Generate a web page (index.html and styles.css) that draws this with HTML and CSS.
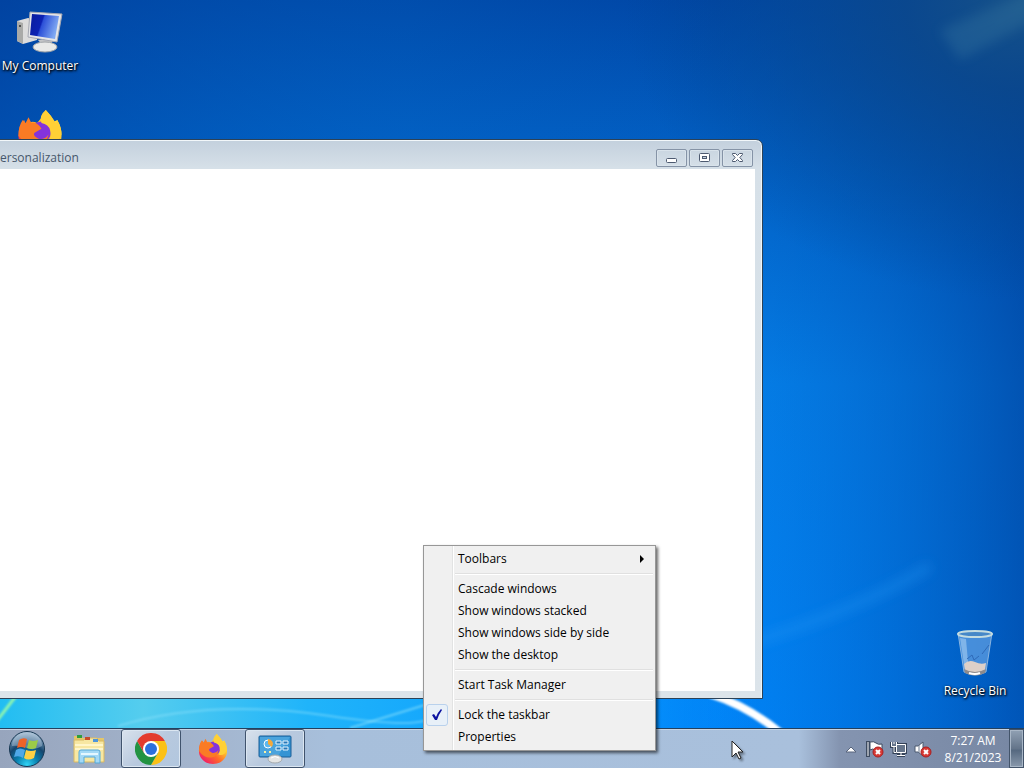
FILE: index.html
```html
<!DOCTYPE html>
<html lang="en">
<head>
    <meta charset="UTF-8">
    <meta name="viewport" content="width=device-width, initial-scale=1.0">
    <title>Desktop</title>
    <link rel="stylesheet" href="styles.css">
</head>
<body>
    <main class="desktop">
        <svg class="wallpaper" viewBox="0 0 1024 768" preserveAspectRatio="none" aria-hidden="true">
            <defs>
                <linearGradient id="sky" x1="0" y1="0" x2="0" y2="1">
                    <stop offset="0" stop-color="#0147a6"/>
                    <stop offset="0.2" stop-color="#0260c4"/>
                    <stop offset="0.5" stop-color="#057fe8"/>
                    <stop offset="1" stop-color="#0084f8"/>
                </linearGradient>
                <linearGradient id="shade" x1="0" y1="0" x2="1" y2="0">
                    <stop offset="0" stop-color="#003f9c" stop-opacity="0.5"/>
                    <stop offset="0.4" stop-color="#0068c8" stop-opacity="0.2"/>
                    <stop offset="0.7" stop-color="#0060c8" stop-opacity="0"/>
                    <stop offset="1" stop-color="#003c96" stop-opacity="0.65"/>
                </linearGradient>
                <linearGradient id="water" x1="0" y1="0" x2="1" y2="0">
                    <stop offset="0" stop-color="#22bdf2"/>
                    <stop offset="0.14" stop-color="#55cdee"/>
                    <stop offset="0.3" stop-color="#20b4fa"/>
                    <stop offset="0.6" stop-color="#0796ff"/>
                    <stop offset="0.74" stop-color="#0084f8" stop-opacity="0"/>
                </linearGradient>
                <radialGradient id="corner" cx="1" cy="0" r="1">
                    <stop offset="0" stop-color="#175289"/>
                    <stop offset="0.3" stop-color="#0c4788" stop-opacity="0.8"/>
                    <stop offset="1" stop-color="#00428c" stop-opacity="0"/>
                </radialGradient>
                <filter id="soft"><feGaussianBlur stdDeviation="1"/></filter>
                <filter id="softer" x="-20%" y="-50%" width="140%" height="200%"><feGaussianBlur stdDeviation="6"/></filter>
            </defs>
            <rect width="1024" height="768" fill="url(#sky)"/>
            <rect width="1024" height="768" fill="url(#shade)"/>
            <rect y="698" width="1024" height="70" fill="url(#water)"/>
            <rect x="624" width="400" height="300" fill="url(#corner)"/>
            <path d="M940 30L1034 -10V20L960 60Z" fill="#4788a8" opacity="0.25" filter="url(#softer)"/>
            <path d="M740 646Q860 610 930 566" fill="none" stroke="#269af5" stroke-width="8" opacity="0.4" filter="url(#softer)"/>
            <path d="M710 694Q748 706 782 734" fill="none" stroke="#fff" stroke-width="8" filter="url(#soft)"/>
            <path d="M-4 722L16 696" stroke="#8ff5b0" stroke-width="3" filter="url(#soft)"/>
            <path d="M118 726Q210 698 330 716T428 706" fill="none" stroke="#8fe2fb" stroke-width="2" opacity="0.5" filter="url(#soft)"/>
            <path d="M350 728L428 704" stroke="#8fe2fb" stroke-width="2" opacity="0.6" filter="url(#soft)"/>
        </svg>

        <a class="shortcut shortcut-computer" href="#">
            <svg width="48" height="44" viewBox="0 0 48 44" aria-hidden="true">
                <defs>
                    <linearGradient id="screen" x1="0" y1="0" x2="1" y2="0.3">
                        <stop offset="0" stop-color="#0a1c9c"/>
                        <stop offset="0.45" stop-color="#0c22b4"/>
                        <stop offset="0.5" stop-color="#2c50d8"/>
                        <stop offset="1" stop-color="#7fa8f2"/>
                    </linearGradient>
                </defs>
                <path d="M1 12L12 9L21 11V31L7 35L1 32Z" fill="#dcdcdc"/>
                <path d="M1 12L7 14V35L1 32Z" fill="#a9aaa8"/>
                <circle cx="4" cy="17" r="1" fill="#333"/>
                <path d="M22 31H37L34 37H27Z" fill="#c4c6c8"/>
                <ellipse cx="29" cy="38" rx="12" ry="5" fill="#e8e9e8" stroke="#a0a4a8"/>
                <path d="M14 3L46 5L41 33L12 28Z" fill="#e4e5e8" stroke="#a5a8b2"/>
                <path d="M16 5L43 7L39 30L14 26Z" fill="url(#screen)"/>
            </svg>
            <span>My Computer</span>
        </a>
        <a class="shortcut shortcut-firefox" href="#" aria-label="Firefox">
            <svg width="46" height="46" viewBox="0 0 32 32" aria-hidden="true"><use href="#firefox"/></svg>
        </a>
        <a class="shortcut shortcut-bin" href="#">
            <svg width="40" height="50" viewBox="0 0 40 50" aria-hidden="true">
                <path d="M3 5H37L31 44Q20 50 9 44Z" fill="#7fb4ec" fill-opacity="0.55" stroke="#a4c4e4" stroke-opacity="0.8"/>
                <path d="M5 10L10 43L14 45L11 11Z" fill="#d8edfc" opacity="0.4"/>
                <path d="M9 36Q14 31 20 34T31 35L30 42Q20 48 10 42Z" fill="#ddd0c8"/>
                <path d="M9 41Q20 47 31 41L30 45Q20 50 10 45Z" fill="#8d8a8c"/>
                <path d="M14 45Q20 47 25 45" fill="none" stroke="#fff" stroke-width="2"/>
                <path d="M27 26L34 17M12 31L17 27L19 32L24 28" fill="none" stroke="#2f6ab8" stroke-width="1"/>
                <ellipse cx="20" cy="6" rx="17" ry="3" fill="#4688c8" stroke="#c4dce0" stroke-width="2"/>
            </svg>
            <span>Recycle Bin</span>
        </a>

        <section class="window">
            <header class="titlebar">
                <h1>ersonalization</h1>
                <div class="window-controls">
                    <button type="button" aria-label="Minimize">
                        <svg width="14" height="12" viewBox="0 0 14 12"><rect x="1.500" y="6.500" width="10" height="4" rx="1" fill="#fff" stroke="#4d5a70"/></svg>
                    </button>
                    <button type="button" aria-label="Maximize">
                        <svg width="14" height="12" viewBox="0 0 14 12"><rect x="1.500" y="1.500" width="10" height="8" rx="1" fill="#fff" stroke="#4d5a70"/><rect x="4.500" y="4.500" width="4" height="2" fill="#c6d3e0" stroke="#4d5a70"/></svg>
                    </button>
                    <button type="button" aria-label="Close">
                        <svg width="14" height="12" viewBox="0 0 14 12"><path d="M1.500 1.500H4.500L6.500 3.500L8.500 1.500H11.500V2.500L8.800 5.500L11.500 8.500V9.500H8.500L6.500 7.500L4.500 9.500H1.500V8.500L4.200 5.500L1.500 2.500Z" fill="#fff" stroke="#4d5a70"/></svg>
                    </button>
                </div>
            </header>
            <div class="window-body"></div>
        </section>
    </main>

    <footer class="taskbar">
        <button class="start" type="button" aria-label="Start">
            <svg width="38" height="38" viewBox="0 0 38 38">
                <defs>
                    <radialGradient id="orb" cx="0.5" cy="0.95" r="0.9">
                        <stop offset="0" stop-color="#30d4f6"/>
                        <stop offset="0.35" stop-color="#087fae"/>
                        <stop offset="0.65" stop-color="#15466e"/>
                        <stop offset="1" stop-color="#8facc6"/>
                    </radialGradient>
                </defs>
                <circle cx="19" cy="19" r="17.500" fill="url(#orb)" stroke="#173752"/>
                <path d="M4 16A15 14 0 0 1 34 16Q26 21 19 18T4 16Z" fill="#dce9f4" opacity="0.35"/>
                <path d="M11 10Q15 7 19 9L17 18Q13 16 9 18Z" fill="#ee6328"/>
                <path d="M21 10Q25 12 30 10L28 18Q23 20 19 18Z" fill="#9bcb48"/>
                <path d="M8 20Q12 17 17 20L15 28Q11 25 6 27Z" fill="#4fa8e8"/>
                <path d="M18 20Q23 22 28 20L26 28Q20 31 16 28Z" fill="#fdd044"/>
            </svg>
        </button>
        <nav class="tasks">
            <button class="task" type="button" aria-label="Windows Explorer">
                <svg width="34" height="34" viewBox="0 0 34 34">
                    <path d="M2 6V4H9L11 6H32V30H2Z" fill="#e4c66a"/>
                    <path d="M2 8H12L14 6H25L27 9H32V30H2Z" fill="#f7e7a2" stroke="#d8b862"/>
                    <path d="M5 3H10V6H5Z" fill="#2f9e3c"/>
                    <path d="M13 5H18V8H13Z" fill="#c84c2a"/>
                    <path d="M21 7H26V10H21Z" fill="#4d96dc"/>
                    <path d="M3 13H31M3 17H31" stroke="#fff6ca" stroke-width="2"/>
                    <path d="M7 31V20Q7 18 9 18H26Q28 18 28 20V31H23V25H12V31Z" fill="#a4d9f5" stroke="#55a9d8"/>
                    <path d="M9 22H26" stroke="#e4f7ff" stroke-width="2"/>
                </svg>
            </button>
            <button class="task open" type="button" aria-label="Google Chrome">
                <svg width="32" height="32" viewBox="0 0 32 32">
                    <path d="M16 8H29.860A16 16 0 0 1 16 32L22.900 20Z" fill="#fbc116"/>
                    <path d="M9.100 20L2.140 8A16 16 0 0 0 16 32L22.900 20Z" fill="#229342"/>
                    <path d="M2.140 8A16 16 0 0 1 29.860 8H16L9.100 20Z" fill="#e33b2e"/>
                    <circle cx="16" cy="16" r="8" fill="#fff"/>
                    <circle cx="16" cy="16" r="6" fill="#2c70dc"/>
                </svg>
            </button>
            <button class="task" type="button" aria-label="Firefox">
                <svg width="30" height="30" viewBox="0 0 32 32">
                    <defs>
                        <linearGradient id="flame" x1="0.9" y1="0.1" x2="0.2" y2="0.9">
                            <stop offset="0" stop-color="#fff044"/>
                            <stop offset="0.35" stop-color="#ffc02c"/>
                            <stop offset="0.65" stop-color="#ff6b28"/>
                            <stop offset="1" stop-color="#f32462"/>
                        </linearGradient>
                        <g id="firefox">
                            <path d="M20 0Q23 3 26 8L28 7Q31 12 31 18A15 14 0 0 1 1 18Q1 11 5 7L6 10Q10 7 14 9Q18 5 20 0Z" fill="url(#flame)"/>
                            <circle cx="17" cy="15" r="7" fill="#8433dc"/>
                            <path d="M1 18Q1 11 4 7L6 9L8 5L10 9Q14 8 17 13L12 16Q11 18 15 20Q19 21 22 17Q20 25 14 25Q7 26 1 18Z" fill="#fa7b24"/>
                            <path d="M20 0Q15 4 17 9Q22 10 23 14Q24 18 22 22Q28 24 31 17Q31 12 28 7L27 9Q24 4 20 0Z" fill="#ffd036"/>
                        </g>
                    </defs>
                    <use href="#firefox"/>
                </svg>
            </button>
            <button class="task open" type="button" aria-label="Personalization">
                <svg width="34" height="30" viewBox="0 0 34 30">
                    <rect x="1" y="2" width="32" height="21" rx="1" fill="#3594d4" stroke="#1b5f97"/>
                    <path d="M2 3H32L20 22H2Z" fill="#66b9e8" opacity="0.45"/>
                    <circle cx="10" cy="10" r="4" fill="#5cb8f0" stroke="#fff" stroke-width="1"/>
                    <path d="M10 10V5A5 5 0 0 1 14 13Z" fill="#f5a838"/>
                    <path d="M18 7H23V10H18ZM25 7H30V10H25ZM18 13H23V16H18ZM25 13H30V16H25Z" fill="#2878b8" stroke="#e6f5ff"/>
                    <path d="M6 18H8M11 18H13" stroke="#f8f1a5" stroke-width="2"/>
                    <ellipse cx="17" cy="25" rx="7" ry="4" fill="#e4e5e4" stroke="#a4a9ac"/>
                    <path d="M13 24Q17 21 21 24" stroke="#fff" fill="none"/>
                </svg>
            </button>
        </nav>
        <div class="tray">
            <button type="button" aria-label="Show hidden icons">
                <svg width="18" height="18" viewBox="0 0 18 18"><path d="M4 12L9 7L14 12Z" fill="#fff" stroke="#58657c"/></svg>
            </button>
            <button type="button" aria-label="Action Center">
                <svg width="18" height="18" viewBox="0 0 18 18">
                    <path d="M2 1V17" stroke="#3d4b60" stroke-width="4"/>
                    <path d="M4 2Q8 1 10 3T16 4V11Q11 12 9 10T4 10Z" fill="#fff" stroke="#3d4b60"/>
                    <path d="M2 2V16" stroke="#fff" stroke-width="1"/>
                    <g id="alert"><circle cx="12" cy="12" r="5" fill="#d83a35" stroke="#a91e20"/><path d="M10 10L14 14M14 10L10 14" stroke="#fff" stroke-width="2"/></g>
                </svg>
            </button>
            <button type="button" aria-label="Network">
                <svg width="18" height="18" viewBox="0 0 18 18">
                    <path d="M6.500 4.500H15.500V12.500H6.500ZM11 13V15.500M7 15.500H15M1.500 2V6.500H6.500V2M4 2V6M4 6V12.500H6" fill="none" stroke="#344258" stroke-width="3"/>
                    <path d="M6.500 4.500H15.500V12.500H6.500Z" fill="#66758b" stroke="#fff"/>
                    <path d="M11 13V15.500M7 15.500H15" stroke="#fff"/>
                    <path d="M1.500 2V6.500H6.500V2" fill="#66758b" stroke="#fff"/>
                    <path d="M4 2V4M4 6V12.500H6" fill="none" stroke="#fff"/>
                </svg>
            </button>
            <button type="button" aria-label="Volume">
                <svg width="18" height="18" viewBox="0 0 18 18"><path d="M1 6H4L9 2V16L4 12H1Z" fill="#fff" stroke="#4a586e"/><path d="M5 5V13" stroke="#6c7a90"/><use href="#alert"/></svg>
            </button>
        </div>
        <div class="clock">
            <time datetime="07:27">7:27 AM</time>
            <time datetime="2023-08-21">8/21/2023</time>
        </div>
        <button class="show-desktop" type="button" aria-label="Show desktop"></button>
    </footer>

    <div class="menu" role="menu">
        <button type="button" role="menuitem">Toolbars
            <svg width="6" height="8" viewBox="0 0 6 8" aria-hidden="true"><path d="M1 0L5 4L1 8Z" fill="#000"/></svg>
        </button>
        <hr>
        <button type="button" role="menuitem">Cascade windows</button>
        <button type="button" role="menuitem">Show windows stacked</button>
        <button type="button" role="menuitem">Show windows side by side</button>
        <button type="button" role="menuitem">Show the desktop</button>
        <hr>
        <button type="button" role="menuitem">Start Task Manager</button>
        <hr>
        <button type="button" role="menuitemcheckbox" aria-checked="true">
            <span class="check"><svg width="12" height="12" viewBox="0 0 12 12" aria-hidden="true"><path d="M1 6L3 5L5 8Q7 3 10 0L11 1Q8 5 6 11H4Z" fill="#0c12a0"/></svg></span>
            Lock the taskbar
        </button>
        <button type="button" role="menuitem">Properties</button>
    </div>

    <svg class="cursor" width="14" height="21" viewBox="0 0 14 21" aria-hidden="true">
        <path d="M1 1V17L5 13L8 19L10 18L7 12H12Z" fill="#fff" stroke="#222"/>
    </svg>
</body>
</html>
```
FILE: styles.css
```css
/* Page */
* {
    box-sizing: border-box;
}

body {
    margin: 0;
    height: 100vh;
    display: flex;
    flex-direction: column;
    overflow: hidden;
    position: relative;
    font-family: "Open Sans", "Noto Sans", sans-serif;
    font-size: 12px;
    line-height: 16px;
    color: #000;
}

button {
    font: inherit;
    color: inherit;
    padding: 0;
    border: none;
    background: none;
}

svg {
    display: block;
    flex: none;
}

/* Desktop */
.desktop {
    flex: 1;
    position: relative;
    overflow: hidden;
    background: #0068cc;
}

.wallpaper {
    position: absolute;
    top: 0;
    left: 0;
    width: 100vw;
    height: 100vh;
}

.shortcut {
    position: absolute;
    width: 80px;
    display: flex;
    flex-direction: column;
    align-items: center;
    gap: 5px;
    color: #fff;
    text-decoration: none;
    white-space: nowrap;
    text-shadow: 1px 1px 2px #000, 0 1px 3px #000;
}

.shortcut-computer {
    left: 0;
    top: 9px;
}

.shortcut-firefox {
    left: 0;
    top: 110px;
}

.shortcut-bin {
    right: 9px;
    bottom: 29px;
}

/* Window */
.window {
    position: absolute;
    left: -8px;
    right: 261px;
    top: 139px;
    bottom: 29px;
    display: flex;
    flex-direction: column;
    padding: 0 7px 7px;
    border: 1px solid #2d4257;
    border-radius: 7px 7px 0 0;
    background: linear-gradient(#c3d0dd, #d6e0e8 28px, #dce4ea);
    box-shadow: inset 0 1px #f2f7fa, inset -1px 0 #eef4f8;
}

.titlebar {
    height: 29px;
    display: flex;
    justify-content: space-between;
}

.titlebar h1 {
    margin: 0;
    padding-top: 10px;
    font-size: 12px;
    font-weight: normal;
    color: #46576b;
}

.window-controls {
    display: flex;
    gap: 2px;
    padding: 9px 2px 2px 0;
}

.window-controls button {
    width: 31px;
    height: 18px;
    display: flex;
    align-items: center;
    justify-content: center;
    border: 1px solid #8593a6;
    border-radius: 2px;
    box-shadow: inset 0 0 0 1px #d9e3eb;
}

.window-body {
    flex: 1;
    background: #fff;
}

/* Taskbar */
.taskbar {
    position: relative;
    height: 40px;
    display: flex;
    border-top: 1px solid #24405e;
    background: linear-gradient(90deg, #97a5bd, #a2b2ca 16%, #a7bfdb 32%, #a9c0dc 78%, #8494b0 82%, #7787a3);
    box-shadow: inset 0 1px #c6d4e4;
}

.start {
    width: 54px;
    display: flex;
    align-items: center;
    justify-content: center;
}

.tasks {
    flex: 1;
    display: flex;
    gap: 2px;
    padding-left: 5px;
}

.task {
    width: 60px;
    display: flex;
    align-items: center;
    justify-content: center;
}

.task.open {
    border: 1px solid #40536d;
    border-radius: 3px;
    background: linear-gradient(135deg, #d9e2ed, #b8c9de 50%, #b2c7df);
    box-shadow: inset 0 0 0 1px #dbe6f1;
}

.tray {
    display: flex;
    align-items: center;
    gap: 6px;
}

.clock {
    width: 77px;
    padding: 3px 0 0 5px;
    display: flex;
    flex-direction: column;
    align-items: center;
    line-height: 17px;
    color: #fff;
}

.show-desktop {
    width: 15px;
    border: 1px solid #43546a;
    background: linear-gradient(#91a1b4, #64758a 50%, #566980 55%, #8999ac);
    box-shadow: inset 0 0 0 1px #a8b6c6;
}

/* Context menu */
.menu {
    position: absolute;
    left: 423px;
    bottom: 17px;
    width: 233px;
    display: flex;
    flex-direction: column;
    padding: 2px;
    border: 1px solid #979797;
    background: linear-gradient(90deg, #f0f0f0 28px, #e2e3e3 28px, #e2e3e3 29px, #fff 29px, #fff 30px, #f0f0f0 30px);
    box-shadow: 2px 2px 3px rgba(0, 0, 0, 0.6);
}

.menu button {
    position: relative;
    height: 22px;
    display: flex;
    align-items: center;
    justify-content: space-between;
    padding: 0 8px 0 32px;
    text-align: left;
}

.menu hr {
    width: 198px;
    height: 2px;
    margin: 3px 0 3px auto;
    border: none;
    border-top: 1px solid #e0e0e0;
    background: #fff;
}

.check {
    position: absolute;
    left: 0;
    top: 0;
    width: 22px;
    height: 22px;
    display: flex;
    align-items: center;
    justify-content: center;
    border: 1px solid #b9d1ec;
    border-radius: 3px;
    background: #e8f0f8;
}

.cursor {
    position: absolute;
    left: 731px;
    top: 740px;
    filter: drop-shadow(2px 2px 1px rgba(0, 0, 0, 0.4));
}
```
